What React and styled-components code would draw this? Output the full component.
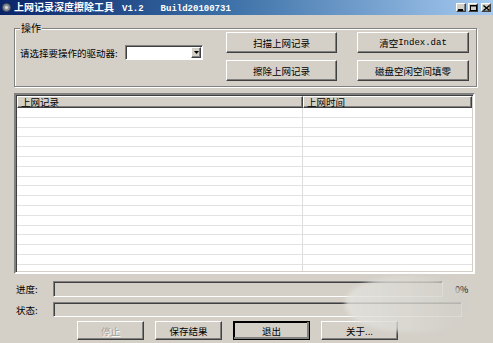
import React from "react";
import styled, { createGlobalStyle, css } from "styled-components";

const Global = createGlobalStyle`
  html, body {
    margin: 0;
    padding: 0;
    background: #d4d0c8;
  }
  body {
    font-family: "Noto Sans CJK SC", "Noto Sans", sans-serif;
    font-size: 9px;
    color: #000;
  }
`;

const raised = css`
  border: 1px solid;
  border-color: #fff #404040 #404040 #fff;
  box-shadow: inset -1px -1px 0 #808080;
`;

const sunken = css`
  border: 1px solid;
  border-color: #808080 #fff #fff #808080;
  box-shadow: inset 1px 1px 0 #404040;
`;

const Window = styled.div`
  position: relative;
  width: 493px;
  height: 343px;
  background: #d4d0c8;
  display: flex;
  flex-direction: column;
  overflow: hidden;
`;

const TitleBar = styled.div`
  height: 15px;
  display: flex;
  align-items: center;
  padding: 0 2px;
  background: linear-gradient(to right, #0a246a 0%, #3a6ea5 45%, #a6caf0 100%);
  color: #fff;
`;

const TitleText = styled.span`
  margin-left: 3px;
  font-size: 10px;
  font-weight: bold;
  line-height: 12px;
  white-space: nowrap;
`;

const Mono = styled.span`
  font-family: "Liberation Mono", "DejaVu Sans Mono", monospace;
  font-size: ${({ size }) => size || 9}px;
  margin-left: ${({ gap }) => gap || 0}px;
`;

const Spacer = styled.div`
  flex: 1;
`;

const CaptionButtons = styled.div`
  display: flex;
  gap: 2px;
  align-items: center;
`;

const CaptionButton = styled.div`
  width: 8px;
  height: 7px;
  background: #d4d0c8;
  ${raised};
  display: flex;
  align-items: center;
  justify-content: center;
  margin-left: ${({ space }) => space || 0}px;
`;

const Content = styled.div`
  display: flex;
  flex-direction: column;
  padding: 0 16px 0 14px;
`;

const GroupBox = styled.div`
  position: relative;
  margin-top: 13px;
  border: 1px solid #808080;
  box-shadow: inset 1px 1px 0 #fff, 1px 1px 0 #fff;
  padding: 3px 7px 5px 5px;
  display: flex;
`;

const Legend = styled.span`
  position: absolute;
  top: -7px;
  left: 5px;
  padding: 0 1px;
  background: #d4d0c8;
  line-height: 12px;
  font-size: 10px;
`;

const DrivePicker = styled.div`
  flex: 1;
  display: flex;
  align-items: center;
  padding-top: 13px;
  align-self: flex-start;
`;

const Label = styled.span`
  width: ${({ w }) => w}px;
  margin-left: ${({ ml }) => ml || 0}px;
  flex-shrink: 0;
  white-space: nowrap;
  font-size: 9.5px;
`;

const Combo = styled.div`
  width: 74px;
  height: 11px;
  background: #fff;
  ${sunken};
  padding: 1px;
  display: flex;
  justify-content: flex-end;
`;

const ComboArrow = styled.div`
  width: 8px;
  height: 9px;
  background: #d4d0c8;
  ${raised};
  display: flex;
  align-items: center;
  justify-content: center;
`;

const ButtonGrid = styled.div`
  display: grid;
  grid-template-columns: 111px 112px;
  grid-template-rows: 21px 21px;
  column-gap: 20px;
  row-gap: 7px;
`;

const Button = styled.div`
  box-sizing: border-box;
  width: ${({ w }) => (w ? `${w}px` : "auto")};
  height: 100%;
  background: #d4d0c8;
  border: 1px solid;
  border-color: #fff #404040 #404040 #fff;
  box-shadow: inset -1px -1px 0 #808080;
  display: flex;
  align-items: center;
  justify-content: center;
  font-size: 9.5px;
  white-space: nowrap;
  color: ${({ disabled }) => (disabled ? "#a0a0a0" : "#000")};
  text-shadow: ${({ disabled }) => (disabled ? "1px 1px 0 #fff" : "none")};
  ${({ primary }) =>
    primary &&
    css`
      outline: 1px solid #000;
      outline-offset: -1px;
      box-shadow: inset -2px -2px 0 #808080, inset 1px 1px 0 #000;
    `}
`;

const ListView = styled.div`
  margin-top: 6px;
  margin-right: 2px;
  height: 177px;
  border: 2px solid;
  border-color: #808080 #fff #fff #808080;
  box-shadow: inset 1px 1px 0 #404040, inset -1px -1px 0 #d4d0c8;
  display: flex;
  flex-direction: column;
  overflow: hidden;
`;

const HeaderRow = styled.div`
  display: grid;
  grid-template-columns: 286px 1fr;
  height: 12px;
  padding: 1px 1px 0 1px;
`;

const HeaderCell = styled.div`
  background: #d4d0c8;
  border: 1px solid;
  border-color: #fff #404040 #404040 #fff;
  box-shadow: inset -1px -1px 0 #808080;
  padding-left: 3px;
  font-size: 9.5px;
  line-height: 10px;
  white-space: nowrap;
  overflow: hidden;
`;

const Rows = styled.div`
  flex: 1;
  display: grid;
  grid-template-columns: 286px 1fr;
  padding: 0 1px 1px 1px;
`;

const Column = styled.div`
  background: repeating-linear-gradient(
    to bottom,
    #fff 0px,
    #fff 8.8px,
    #e2e2e2 8.8px,
    #e2e2e2 9.8px
  );
  border-right: ${({ divider }) => (divider ? "1px solid #dcdcdc" : "none")};
`;

const FieldRow = styled.div`
  display: flex;
  align-items: center;
  margin-top: ${({ mt }) => mt}px;
  height: ${({ h }) => h}px;
`;

const Field = styled.div`
  width: ${({ w }) => w}px;
  height: 100%;
  box-sizing: border-box;
  ${sunken};
`;

const Percent = styled.span`
  margin-left: 12px;
  font-size: 9px;
`;

const ButtonRow = styled.div`
  display: flex;
  gap: 11px;
  height: 19px;
  margin-top: 4px;
  padding-left: 63px;
`;

const Watermark = styled.div`
  position: absolute;
  left: 345px;
  top: 276px;
  width: 122px;
  height: 56px;
  border-radius: 50% 45% 40% 50%;
  background: linear-gradient(90deg, #e4e3de 0%, #dcdad4 50%, #d0cec8 100%);
  opacity: 0.8;
  filter: blur(2px);
  pointer-events: none;
`;

const AppIcon = () => (
  <svg width="9" height="9" viewBox="0 0 9 9">
    <circle cx="4.5" cy="4.5" r="4" fill="#8a8f98" stroke="#3a3f48" strokeWidth="0.8" />
    <circle cx="4.5" cy="4.5" r="1.6" fill="#d8dce2" />
  </svg>
);

const App = () => {
  return (
    <Window>
      <Global />
      <TitleBar>
        <AppIcon />
        <TitleText>
          上网记录深度擦除工具
          <Mono size={9} gap={8}>V1.2</Mono>
          <Mono size={9} gap={17}>Build20100731</Mono>
        </TitleText>
        <Spacer />
        <CaptionButtons>
          <CaptionButton>
            <svg width="6" height="6" viewBox="0 0 6 6">
              <rect x="0" y="4" width="5" height="2" fill="#000" />
            </svg>
          </CaptionButton>
          <CaptionButton>
            <svg width="7" height="6" viewBox="0 0 7 6">
              <rect x="0.5" y="0.5" width="6" height="5" fill="none" stroke="#000" />
              <rect x="0" y="0" width="7" height="1.5" fill="#000" />
            </svg>
          </CaptionButton>
          <CaptionButton space={1}>
            <svg width="7" height="6" viewBox="0 0 7 6">
              <path d="M0.5 0.5 L6.5 5.5 M6.5 0.5 L0.5 5.5" stroke="#000" strokeWidth="1.4" />
            </svg>
          </CaptionButton>
        </CaptionButtons>
      </TitleBar>

      <Content>
        <GroupBox>
          <Legend>操作</Legend>
          <DrivePicker>
            <Label w={105}>请选择要操作的驱动器:</Label>
            <Combo>
              <ComboArrow>
                <svg width="5" height="3" viewBox="0 0 5 3">
                  <path d="M0 0 H5 L2.5 3 Z" fill="#000" />
                </svg>
              </ComboArrow>
            </Combo>
          </DrivePicker>
          <ButtonGrid>
            <Button>扫描上网记录</Button>
            <Button>
              清空<Mono size={9}>Index.dat</Mono>
            </Button>
            <Button>擦除上网记录</Button>
            <Button>磁盘空闲空间填零</Button>
          </ButtonGrid>
        </GroupBox>

        <ListView>
          <HeaderRow>
            <HeaderCell>上网记录</HeaderCell>
            <HeaderCell>上网时间</HeaderCell>
          </HeaderRow>
          <Rows>
            <Column divider />
            <Column />
          </Rows>
        </ListView>

        <FieldRow mt={7} h={16}>
          <Label w={37} ml={2}>进度:</Label>
          <Field w={390} />
          <Percent>0%</Percent>
        </FieldRow>
        <FieldRow mt={5} h={15}>
          <Label w={37} ml={2}>状态:</Label>
          <Field w={409} />
        </FieldRow>

        <ButtonRow>
          <Button w={67} disabled>停止</Button>
          <Button w={67}>保存结果</Button>
          <Button w={77} primary>退出</Button>
          <Button w={77}>关于...</Button>
        </ButtonRow>
      </Content>
      <Watermark />
    </Window>
  );
};

export default App;
